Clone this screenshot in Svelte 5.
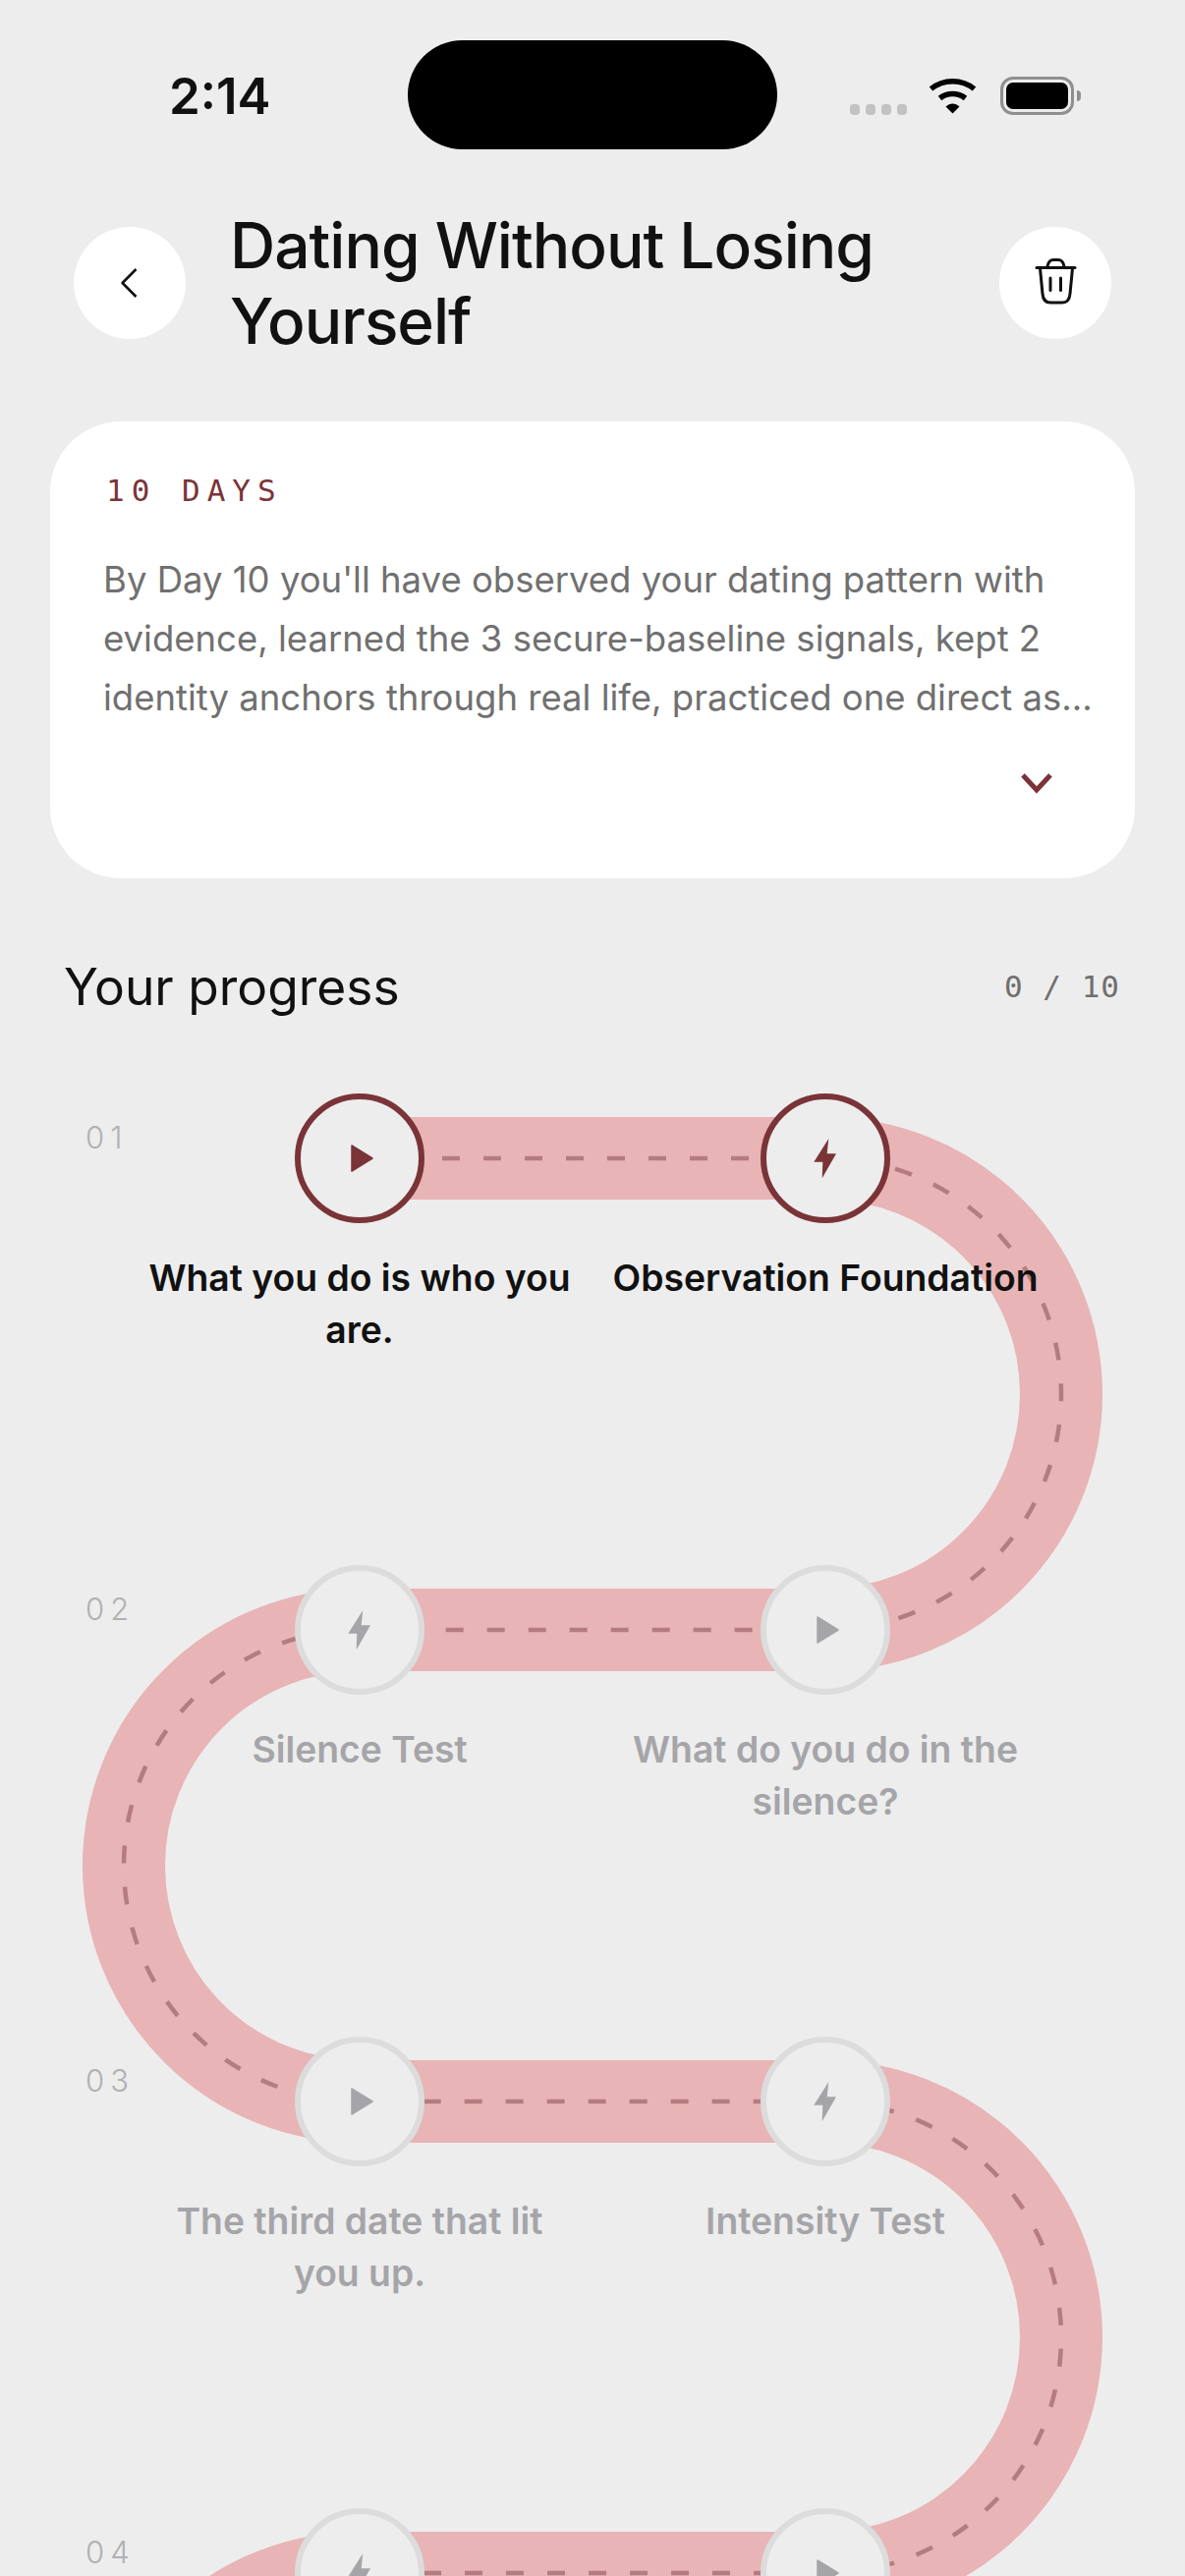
<script>
    const rows = [
        { num: "01", active: true, nodes: [
            { icon: "play", title: "What you do is who you are." },
            { icon: "bolt", title: "Observation Foundation" }
        ]},
        { num: "02", nodes: [
            { icon: "bolt", title: "Silence Test" },
            { icon: "play", title: "What do you do in the silence?" }
        ]},
        { num: "03", nodes: [
            { icon: "play", title: "The third date that lit you up." },
            { icon: "bolt", title: "Intensity Test" }
        ]},
        { num: "04", nodes: [
            { icon: "bolt", title: "" },
            { icon: "play", title: "" }
        ]}
    ];

    const road = "M366 66 H840 A240 240 0 0 1 840 546 H366 A240 240 0 0 0 366 1026 H840 A240 240 0 0 1 840 1506 H366 A240 240 0 0 0 366 1986";
</script>

<div class="page">
    <div class="status">
        <span class="time">2:14</span>
        <div class="island"></div>
        <div class="indicators">
            <div class="dots"><i></i><i></i><i></i><i></i></div>
            <svg class="wifi" width="49" height="37" viewBox="0 0 49 37">
                <path d="M2.5 11.5 C15 1 34 1 46.5 11.5" fill="none" stroke="#000" stroke-width="5.5"/>
                <path d="M11.5 21 C19 15 30 15 37.5 21" fill="none" stroke="#000" stroke-width="5.5"/>
                <path d="M17.5 29.5 C22 25.5 27 25.5 31.5 29.5 L24.5 36.5 Z" fill="#000"/>
            </svg>
            <div class="battery"><div class="charge"></div></div>
            <div class="battery-cap"></div>
        </div>
    </div>

    <header class="top">
        <button class="round" aria-label="Back">
            <svg width="24" height="36" viewBox="0 0 24 36">
                <path d="M18.5 4 L4.6 18 L18.5 32" fill="none" stroke="#111" stroke-width="2.6" stroke-linejoin="round"/>
            </svg>
        </button>
        <h1>Dating Without Losing Yourself</h1>
        <button class="round" aria-label="Delete">
            <svg width="70" height="70" viewBox="0 0 70 70" fill="none" stroke="#111" stroke-width="3" stroke-linecap="round">
                <path d="M16 19.5 H55"/>
                <path d="M27 18 C28 13 30 11.5 33 11.5 H38 C41 11.5 43 13 44 18"/>
                <path d="M19.5 20 L22 46 C22.5 52 25 55 30 55 H42 C47 55 49.5 52 50 46 L52.5 20"/>
                <path d="M30 30 V42.5"/>
                <path d="M40.5 30 V42.5"/>
            </svg>
        </button>
    </header>

    <section class="card">
        <div class="days">10 DAYS</div>
        <p class="summary">By Day 10 you'll have observed your dating pattern with evidence, learned the 3 secure-baseline signals, kept 2 identity anchors through real life, practiced one direct as...</p>
        <div class="more">
            <svg width="34" height="22" viewBox="0 0 34 22">
                <path d="M3 3 L17 18 L31 3" fill="none" stroke="#7a3438" stroke-width="5"/>
            </svg>
        </div>
    </section>

    <div class="progress-head">
        <h2>Your progress</h2>
        <span class="count">0 / 10</span>
    </div>

    <div class="canvas">
        <svg class="road" width="1206" height="2000" viewBox="0 0 1206 2000" fill="none">
            <path d={road} stroke="#e8b4b5" stroke-width="84"/>
            <path d={road} stroke="#b57c80" stroke-width="4.5" stroke-dasharray="18 24"/>
        </svg>

        {#each rows as row}
            <div class="row">
                <span class="num">{row.num}</span>
                {#each row.nodes as node}
                    <div class="stop" class:active={row.active}>
                        <div class="node">
                            <svg width="80" height="80" viewBox="0 0 80 80">
                                {#if node.icon === "play"}
                                    <path d="M32 27 L53 40 L32 53 Z" fill="currentColor" stroke="currentColor" stroke-width="1.5" stroke-linejoin="round"/>
                                {:else}
                                    <path d="M43.3 20 L28.3 43.7 H37.3 L36.7 60.3 L51 35.3 H41.7 Z" fill="currentColor"/>
                                {/if}
                            </svg>
                        </div>
                        <div class="title">{node.title}</div>
                    </div>
                {/each}
            </div>
        {/each}
    </div>
</div>

<style>
    :global(body) {
        margin: 0;
        background: #ededed;
    }

    .page {
        position: relative;
        width: 1206px;
        height: 2622px;
        overflow: hidden;
        background: #ededed;
        font-family: Inter, sans-serif;
        color: #111;
    }

    .status {
        display: grid;
        grid-template-columns: 415px 376px 1fr;
        align-items: start;
        padding-top: 41px;
    }
    .time {
        padding-left: 172px;
        margin-top: 27px;
        font-size: 51px;
        font-weight: 600;
        line-height: 60px;
    }
    .island {
        height: 111px;
        background: #000;
        border-radius: 56px;
    }
    .indicators {
        display: flex;
        align-items: flex-start;
        padding-left: 74px;
        margin-top: 37px;
    }
    .dots {
        display: flex;
        gap: 6px;
        margin-top: 28px;
    }
    .dots i {
        width: 10px;
        height: 11px;
        border-radius: 4px;
        background: #c2c2c2;
    }
    .wifi {
        margin-left: 22px;
        margin-top: 1px;
    }
    .battery {
        box-sizing: border-box;
        width: 75px;
        height: 39px;
        margin-left: 24px;
        padding: 3px;
        border: 3px solid #8f8f8f;
        border-radius: 13px;
    }
    .charge {
        height: 100%;
        background: #000;
        border-radius: 7px;
    }
    .battery-cap {
        width: 4px;
        height: 11px;
        margin: 14px 0 0 3px;
        background: #8f8f8f;
        border-radius: 0 5px 5px 0;
    }

    .top {
        display: flex;
        align-items: center;
        gap: 45px;
        padding: 0 75px;
        margin-top: 59px;
    }
    .round {
        flex: none;
        display: flex;
        align-items: center;
        justify-content: center;
        width: 114px;
        height: 114px;
        padding: 0;
        border: none;
        border-radius: 50%;
        background: #fff;
    }
    h1 {
        flex: 1;
        margin: 0;
        font-size: 64px;
        font-weight: 500;
        line-height: 77px;
        letter-spacing: -1px;
    }

    .card {
        box-sizing: border-box;
        width: 1104px;
        height: 465px;
        margin: 64px 0 0 51px;
        padding: 52px 40px 0 54px;
        background: #fff;
        border-radius: 72px;
    }
    .days {
        padding-left: 3px;
        font-family: "DejaVu Sans Mono", monospace;
        font-size: 31px;
        line-height: 36px;
        letter-spacing: 7px;
        color: #7a3438;
    }
    .summary {
        margin: 43px 0 0;
        font-size: 36.5px;
        line-height: 60px;
        color: #707070;
    }
    .more {
        display: flex;
        justify-content: flex-end;
        padding-right: 43px;
        margin-top: 46px;
    }

    .progress-head {
        display: flex;
        align-items: center;
        justify-content: space-between;
        padding: 0 66px 0 65px;
        margin-top: 75px;
        height: 70px;
    }
    h2 {
        margin: 0;
        font-size: 51.5px;
        font-weight: 400;
    }
    .count {
        font-family: "DejaVu Sans Mono", monospace;
        font-size: 31px;
        letter-spacing: 1px;
        color: #6f6f6f;
    }

    .canvas {
        position: relative;
        margin-top: 74px;
    }
    .road {
        position: absolute;
        top: 0;
        left: 0;
    }
    .row {
        position: relative;
        display: grid;
        grid-template-columns: 129px 474px 474px;
        height: 480px;
    }
    .num {
        padding: 25px 0 0 87px;
        font-size: 31px;
        font-weight: 300;
        line-height: 40px;
        letter-spacing: 6px;
        color: #b0b0b4;
    }
    .stop {
        display: flex;
        flex-direction: column;
        align-items: center;
        padding: 0 19px;
        color: #a5a5a9;
    }
    .stop.active {
        color: #111;
    }
    .node {
        box-sizing: border-box;
        display: flex;
        align-items: center;
        justify-content: center;
        flex: none;
        width: 132px;
        height: 132px;
        border: 6px solid #dcdcdc;
        border-radius: 50%;
        background: #ededed;
    }
    .active .node {
        border-color: #7a3438;
        color: #7a3438;
    }
    .title {
        margin-top: 29px;
        font-size: 37.3px;
        font-weight: 600;
        line-height: 53px;
        text-align: center;
    }
</style>
